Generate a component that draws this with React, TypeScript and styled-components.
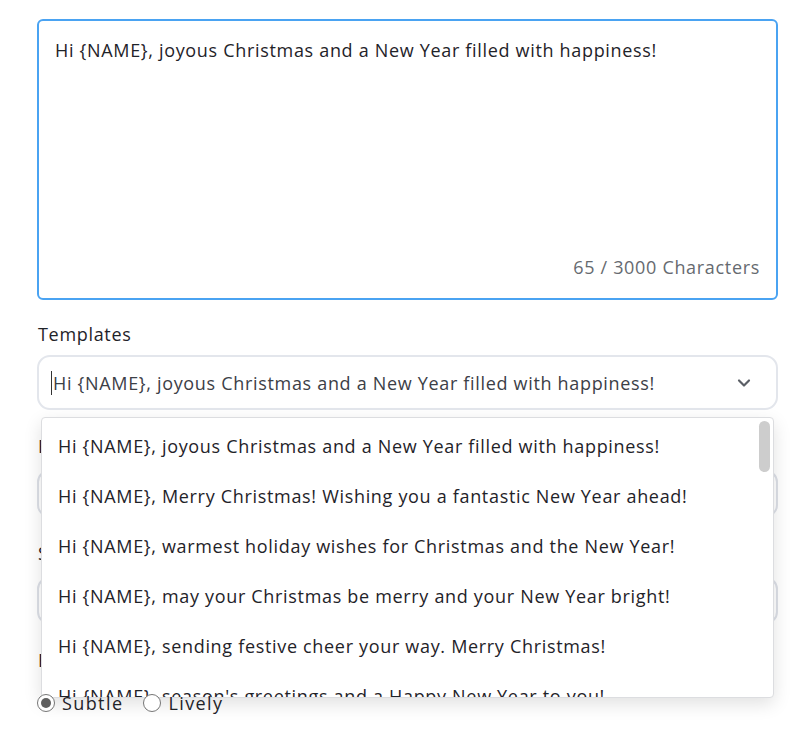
import React from 'react';
import styled, { createGlobalStyle } from 'styled-components';

const templates = [
  'Hi {NAME}, joyous Christmas and a New Year filled with happiness!',
  'Hi {NAME}, Merry Christmas! Wishing you a fantastic New Year ahead!',
  'Hi {NAME}, warmest holiday wishes for Christmas and the New Year!',
  'Hi {NAME}, may your Christmas be merry and your New Year bright!',
  'Hi {NAME}, sending festive cheer your way. Merry Christmas!',
  "Hi {NAME}, season's greetings and a Happy New Year to you!",
  'Hi {NAME}, have a wonderful Christmas and a prosperous New Year!',
];

const message = templates[0];

const App = (): JSX.Element => {
  return (
    <>
      <GlobalStyle />
      <Page>
        <MessageBox>
          <MessageText>{message}</MessageText>
          <Counter>{message.length} / 3000 Characters</Counter>
        </MessageBox>

        <Field $first>
          <Label>Templates</Label>
          <SelectWrap>
            <SelectBox>
              <Caret />
              <SelectValue>{message}</SelectValue>
              <Chevron viewBox="0 0 24 24">
                <path d="M6 9l6 6 6-6" />
              </Chevron>
            </SelectBox>
            <Menu>
              <MenuList>
                {templates.map((t) => (
                  <MenuItem key={t}>{t}</MenuItem>
                ))}
              </MenuList>
              <ScrollThumb />
            </Menu>
          </SelectWrap>
        </Field>

        <Field>
          <Label>Event name</Label>
          <Input />
        </Field>

        <Field>
          <Label>Sender</Label>
          <Input />
        </Field>

        <Field>
          <Label>Effect</Label>
          <RadioRow>
            <RadioOption>
              <Radio $checked />
              Subtle
            </RadioOption>
            <RadioOption>
              <Radio />
              Lively
            </RadioOption>
          </RadioRow>
        </Field>
      </Page>
    </>
  );
};

export default App;

const GlobalStyle = createGlobalStyle`
  body {
    margin: 0;
    background: #fff;
    font-family: 'Open Sans', 'Noto Sans', sans-serif;
    font-size: 18px;
    letter-spacing: 0.68px;
    color: #1f2329;
  }
`;

const Page = styled.div`
  width: 741px;
  min-height: 710px;
  padding: 19px 0 0 37px;
  display: flex;
  flex-direction: column;
`;

const MessageBox = styled.div`
  box-sizing: border-box;
  height: 281px;
  border: 2px solid #4aa3f2;
  border-radius: 6px;
  padding: 16px 16px 18px 16px;
  display: flex;
  flex-direction: column;
  justify-content: space-between;
`;

const MessageText = styled.div`
  line-height: 26px;
  color: #1f2329;
`;

const Counter = styled.div`
  align-self: flex-end;
  line-height: 26px;
  color: #666a70;
`;

const Field = styled.div<{ $first?: boolean }>`
  display: flex;
  flex-direction: column;
  gap: ${(p) => (p.$first ? '7px' : '10px')};
  margin-top: ${(p) => (p.$first ? '20px' : '22px')};
`;

const Label = styled.div`
  line-height: 28px;
  color: #1f2329;
  margin-left: 1px;
`;

const SelectWrap = styled.div`
  position: relative;
`;

const SelectBox = styled.div`
  box-sizing: border-box;
  height: 55px;
  border: 2px solid #e3e6ec;
  border-radius: 13px;
  display: flex;
  align-items: center;
  padding: 0 22px 0 12px;
`;

const Caret = styled.span`
  width: 1px;
  height: 24px;
  background: #333;
  margin-right: 1px;
`;

const SelectValue = styled.div`
  flex: 1;
  color: #3c4047;
  white-space: nowrap;
  overflow: hidden;
`;

const Chevron = styled.svg`
  width: 20px;
  height: 20px;
  fill: none;
  stroke: #5b5f66;
  stroke-width: 2.6;
  stroke-linecap: round;
  stroke-linejoin: round;
`;

const Menu = styled.div`
  position: absolute;
  z-index: 5;
  top: 62px;
  left: 4px;
  right: 4px;
  height: 281px;
  box-sizing: border-box;
  background: #fff;
  border: 1px solid #dcdde0;
  border-radius: 4px;
  box-shadow: 0 6px 18px rgba(0, 0, 0, 0.12);
  overflow: hidden;
`;

const MenuList = styled.div`
  display: flex;
  flex-direction: column;
  padding-top: 3px;
`;

const MenuItem = styled.div`
  height: 50px;
  display: flex;
  align-items: center;
  padding-left: 16px;
  color: #1f2329;
  white-space: nowrap;
`;

const ScrollThumb = styled.div`
  position: absolute;
  top: 3px;
  right: 3px;
  width: 11px;
  height: 51px;
  border-radius: 6px;
  background: #cdcdcd;
`;

const Input = styled.div`
  box-sizing: border-box;
  height: 47px;
  border: 2px solid #dde0e7;
  border-radius: 12px;
`;

const RadioRow = styled.div`
  position: relative;
  z-index: 6;
  display: flex;
  gap: 20px;
  margin-top: 9px;
`;

const RadioOption = styled.label`
  display: flex;
  align-items: center;
  gap: 7px;
  line-height: 20px;
  letter-spacing: 1.4px;
  color: #1f2329;
`;

const Radio = styled.span<{ $checked?: boolean }>`
  box-sizing: border-box;
  width: 18px;
  height: 18px;
  border-radius: 50%;
  border: 1px solid #767676;
  background: #fff;
  position: relative;

  &::after {
    content: '';
    position: absolute;
    inset: 3px;
    border-radius: 50%;
    background: ${(p) => (p.$checked ? '#5f5f5f' : 'transparent')};
  }
`;
